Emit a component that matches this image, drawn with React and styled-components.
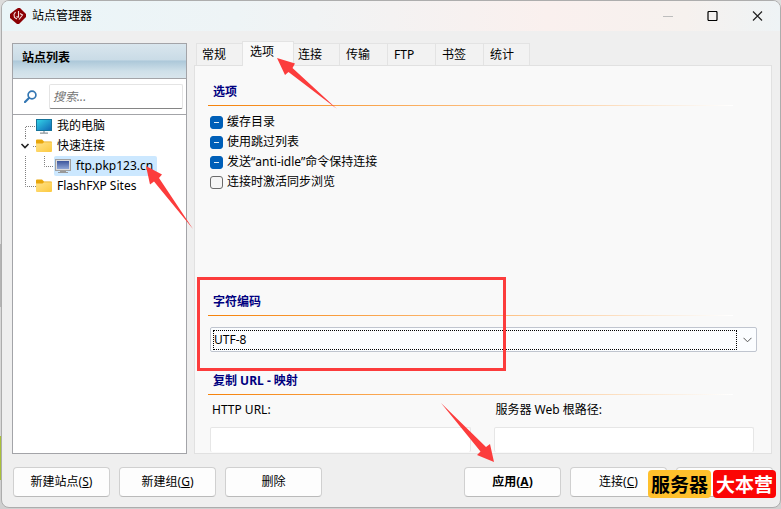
import styled, { createGlobalStyle, css } from "styled-components";

const GlobalStyle = createGlobalStyle`
  * {
    box-sizing: border-box;
  }

  body {
    margin: 0;
    color: #000;
    font-family: "Noto Sans", "Noto Sans CJK SC", sans-serif;
    font-size: 12px;
    line-height: 20px;
  }

  button, input, select {
    font: inherit;
    color: inherit;
  }
`

const Desktop = styled.div`
  position: relative;
  display: flex;
  min-height: 100vh;
  padding: 0 0 1px 1px;
  background: linear-gradient(#dcdcdc 244px, #b4b4b4 244px, #b4b4b4 307px, #d8d8d8 307px, #d8d8d8 436px, #a9c03a 436px, #a9c03a 480px, #d0d0d0 480px);
`

const Window = styled.div`
  display: flex;
  flex-direction: column;
  flex: 1;
  min-width: 0;
  border: 1px solid #adadad;
  border-radius: 8px;
  background-color: #efefef;
  overflow: hidden;
`

const TitleBar = styled.header`
  display: flex;
  align-items: center;
  height: 30px;
  padding-left: 8px;
  background: linear-gradient(90deg, #eaf5f8 0%, #eef4f6 30%, #faf0ee 70%, #f6f1ee 88%, #eef3f5 100%);
`

const Title = styled.h1`
  flex: 1;
  margin: 0 0 0 6px;
  font-size: 12px;
  font-weight: 400;
`

const CaptionButton = styled.button`
  display: flex;
  align-items: center;
  justify-content: center;
  width: 45px;
  height: 28px;
  padding: 0;
  border: none;
  background: transparent;
`

const Body = styled.div`
  display: flex;
  flex: 1;
  gap: 7px;
  padding: 10px 8px 0 10px;
`

const Sidebar = styled.aside`
  display: flex;
  flex-direction: column;
  width: 175px;
  margin-top: 2px;
  border: 1px solid #a3a4a8;
  background-color: #fff;
`

const SidebarTitle = styled.h2`
  height: 35px;
  margin: 0;
  padding: 4px 9px;
  border-bottom: 1px solid #a3a4a8;
  background: linear-gradient(#d9e6ee 0%, #c9dbe6 48%, #abc7d9 49%, #cfe0e9 80%, #d8e5ec 100%);
  font-size: 12px;
  font-weight: 700;
`

const SearchRow = styled.label`
  display: flex;
  align-items: center;
  gap: 12px;
  height: 36px;
  padding: 0 3px 0 11px;
  border-bottom: 1px solid #a3a4a8;
`

const SearchInput = styled.input`
  flex: 1;
  min-width: 0;
  height: 25px;
  padding: 0 3px;
  border: 1px solid #e4e4e4;
  border-bottom-color: #858585;
  border-radius: 2px;
  background-color: #fff;
  font-style: italic;

  &::placeholder {
    color: #757575;
  }
`

const Tree = styled.ul`
  margin: 0;
  padding: 1px 0 0 5px;
  list-style: none;
`

const TreeItem = styled.li`
  display: flex;
  align-items: center;
  height: 20px;
`

const Node = styled.span`
  display: flex;
  align-items: center;
  gap: 5px;
  height: 20px;
  padding-right: 4px;
  border-radius: 2px;
  ${({ $selected }) => $selected && css`
    padding-left: 1px;
    background-color: #cce8ff;
  `}
`

const Main = styled.main`
  display: flex;
  flex-direction: column;
  flex: 1;
  min-width: 0;
`

const TabList = styled.div`
  display: flex;
  align-items: flex-end;
  height: 25px;
  margin-bottom: -1px;
  padding-left: 2px;
`

const Tab = styled.button`
  width: 48px;
  height: 23px;
  padding: 0 0 0 6px;
  border: 1px solid #e3e3e3;
  border-left: none;
  background-color: #f2f2f2;
  text-align: left;

  &:first-child {
    padding-left: 5px;
    border-left: 1px solid #e3e3e3;
  }

  &:last-child {
    width: 46px;
  }

  ${({ $active }) => $active && css`
    position: relative;
    width: 52px;
    height: 25px;
    margin: 0 -2px;
    padding: 0 0 4px 7px;
    border-left: 1px solid #e3e3e3;
    border-bottom: none;
    background-color: #f9f9f9;
  `}
`

const Page = styled.div`
  flex: 1;
  padding: 16px 14px 0 13px;
  border: 1px solid #e1e1e1;
  background-color: #f9f9f9;
`

const Section = styled.section`
  min-height: ${({ $height }) => $height}px;
`

const SectionTitle = styled.h3`
  height: 24px;
  margin: 0 24px 0 0;
  padding-left: 5px;
  background: linear-gradient(90deg, #f5820a, #fdc48a 58%, #fbf3ea 92%, #fff) bottom / 100% 1px no-repeat;
  color: #000080;
  font-size: 12px;
  font-weight: 700;
`

const CheckList = styled.div`
  display: flex;
  flex-direction: column;
  padding: 6px 2px;
`

const CheckLabel = styled.label`
  display: flex;
  align-items: center;
  gap: 4px;
`

const CheckBox = styled.input`
  appearance: none;
  width: 13px;
  height: 13px;
  margin: 0;
  border: 1px solid #6b6b6b;
  border-radius: 3px;
  background-color: #f5f5f5;

  &:indeterminate {
    border-color: #005fb8;
    background: linear-gradient(#e6f0f8, #e6f0f8) center / 5px 1px no-repeat #005fb8;
  }
`

const SelectBox = styled.div`
  display: grid;
  align-items: center;
  margin: 11px 0 0 2px;
  border: 1px solid #c0c5cf;
  border-radius: 2px;
  background-color: #fbfdff;

  > * {
    grid-area: 1 / 1;
  }

  svg {
    justify-self: end;
    margin-right: 4px;
    pointer-events: none;
  }
`

const Select = styled.select`
  appearance: none;
  height: 20px;
  margin: 2px 19px 1px 2px;
  padding: 0;
  border: 1px dotted #000;
  background-color: transparent;
  line-height: 16px;
  outline: none;
`

const Fields = styled.div`
  display: grid;
  grid-template-columns: 1fr 1fr;
  gap: 23px;
  padding: 5px 3px 0 2px;
`

const Field = styled.label`
  display: flex;
  flex-direction: column;
  gap: 7px;
  text-indent: 2px;
`

const TextInput = styled.input`
  width: 100%;
  height: 25px;
  border: 1px solid #e6e6e6;
  border-bottom: none;
  border-radius: 2px;
  background-color: #fff;
`

const Footer = styled.footer`
  display: flex;
  gap: 9px;
  padding: 13px 7px 10px 11px;
`

const FooterGroup = styled.div`
  display: flex;
  gap: 9px;

  &:last-child {
    margin-left: auto;
  }
`

const PushButton = styled.button`
  width: 97px;
  height: 30px;
  padding: 0;
  border: 1px solid #d0d0d0;
  border-bottom-color: #bababa;
  border-radius: 4px;
  background-color: #fdfdfd;
  font-weight: ${({ $primary }) => ($primary ? 700 : 400)};
`

const Highlight = styled.div`
  position: absolute;
  top: 277px;
  left: 197px;
  width: 309px;
  height: 94px;
  border: 3px solid #fc3c3c;
  pointer-events: none;
`

const Pointers = styled.svg`
  position: absolute;
  top: 0;
  left: 0;
  pointer-events: none;
`

const Stamp = styled.div`
  position: absolute;
  right: 5px;
  bottom: 11px;
  display: flex;
  gap: 2px;
  pointer-events: none;
`

const StampPart = styled.span`
  padding: 0 3px;
  border-radius: 4px;
  background-color: ${({ $color }) => $color};
  color: ${({ $ink }) => $ink};
  font-family: "Noto Sans CJK SC", sans-serif;
  font-size: 19px;
  font-weight: 700;
  line-height: 28px;
`

const Logo = () => (
  <svg width="16" height="16" viewBox="0 0 16 16">
    <path d="M8 0 L10 0 L16 6 V9 L9 16 H7 L0 10 V6 L5 2 Z" fill="#8b0004" />
    <path d="M5.5 4 L4 6.5 L4.5 9.5 L7 11 M8.5 3 V9.5 M8.5 9.5 L6.5 8.5 M10 5.5 L12.5 7 L9 11.5" stroke="#f3dfe0" strokeWidth="1.1" fill="none" />
  </svg>
)

const SearchIcon = () => (
  <svg width="13" height="13" viewBox="0 0 13 13" fill="none" stroke="#3477b3">
    <circle cx="8" cy="5" r="3.9" strokeWidth="1.7" />
    <path d="M5 8 L1 12" strokeWidth="2.2" strokeLinecap="round" />
  </svg>
)

const MonitorIcon = () => (
  <svg width="16" height="16" viewBox="0 0 16 16">
    <defs>
      <linearGradient id="screen" x2="1" y2="1">
        <stop stopColor="#34d5e8" />
        <stop offset="1" stopColor="#0f66b5" />
      </linearGradient>
    </defs>
    <rect x=".5" y="1.5" width="15" height="11" fill="url(#screen)" stroke="#16739a" />
    <path d="M8 13 V15 M4 15.2 H12" stroke="#8c969c" strokeWidth="1.3" />
  </svg>
)

const FolderIcon = () => (
  <svg width="16" height="16" viewBox="0 0 16 16">
    <defs>
      <linearGradient id="folder" x2="1" y2="1">
        <stop stopColor="#ffe28a" />
        <stop offset="1" stopColor="#fcc93f" />
      </linearGradient>
    </defs>
    <path d="M0 2.5 Q0 1.5 1 1.5 H6 L8 3.5 H15 Q16 3.5 16 4.5 V8 H0 Z" fill="#e9a70c" />
    <path d="M0 5.5 H6.5 L8 4.2 H16 V13 Q16 14 15 14 H1 Q0 14 0 13 Z" fill="url(#folder)" />
  </svg>
)

const HostIcon = () => (
  <svg width="16" height="16" viewBox="0 0 16 16">
    <defs>
      <linearGradient id="host" x2="0" y2="1">
        <stop stopColor="#3d569c" />
        <stop offset="1" stopColor="#8fa6d6" />
      </linearGradient>
    </defs>
    <rect x=".5" y="1.5" width="15" height="11" fill="#dcdcdc" stroke="#a0a0a0" />
    <rect x="2" y="3" width="12" height="8" fill="url(#host)" />
    <path d="M5 13.5 H11 M3 14.5 H13" stroke="#999" />
  </svg>
)

const Chevron = () => (
  <svg width="9" height="6" viewBox="0 0 9 6" fill="none" stroke="#555">
    <path d="M.5 .8 L4.5 4.8 L8.5 .8" />
  </svg>
)

// The connecting lines in front of each node
const BRANCHES = {
  root: { width: 18, lines: "M7.5 20 V10.5 H18" },
  open: { width: 18, lines: "M7.5 0 V3 M15 10.5 H18", arrow: "M3.5 8 L7 11.5 L10.5 8" },
  child: { width: 36, lines: "M7.5 0 V20 M26.5 0 V10.5 H36" },
  last: { width: 18, lines: "M7.5 0 V10.5 H18" }
}

const Branch = ({ type }) => {
  const { width, lines, arrow } = BRANCHES[type];

  return (
    <svg width={width} height="20" fill="none">
      <path d={lines} stroke="#808080" strokeDasharray="1 1" />
      {arrow && <path d={arrow} stroke="#222" strokeWidth="1.6" />}
    </svg>
  )
}

const sites = [
  { name: "我的电脑", branch: "root", Icon: MonitorIcon },
  { name: "快速连接", branch: "open", Icon: FolderIcon },
  { name: "ftp.pkp123.cn", branch: "child", Icon: HostIcon, selected: true },
  { name: "FlashFXP Sites", branch: "last", Icon: FolderIcon }
]

const tabs = ["常规", "选项", "连接", "传输", "FTP", "书签", "统计"]

const options = [
  { label: "缓存目录", mixed: true },
  { label: "使用跳过列表", mixed: true },
  { label: "发送“anti-idle”命令保持连接", mixed: true },
  { label: "连接时激活同步浏览", mixed: false }
]

const Option = ({ label, mixed }) => {
  const setMixed = (el) => {
    if (el) el.indeterminate = mixed;
  }

  return (
    <CheckLabel>
      <CheckBox type="checkbox" ref={setMixed} />
      {label}
    </CheckLabel>
  )
}

const SiteList = () => (
  <Sidebar>
    <SidebarTitle>站点列表</SidebarTitle>
    <SearchRow>
      <SearchIcon />
      <SearchInput type="text" placeholder="搜索..." />
    </SearchRow>
    <Tree>
      {sites.map(({ name, branch, Icon, selected }) => (
        <TreeItem key={name}>
          <Branch type={branch} />
          <Node $selected={selected}>
            <Icon />
            {name}
          </Node>
        </TreeItem>
      ))}
    </Tree>
  </Sidebar>
)

const App = () => {
  return (
    <Desktop>
      <GlobalStyle />
      <Window>
        <TitleBar>
          <Logo />
          <Title>站点管理器</Title>
          <CaptionButton disabled>
            <svg width="10" height="10"><path d="M0 5.5 H10" stroke="#bdbdbd" /></svg>
          </CaptionButton>
          <CaptionButton>
            <svg width="11" height="10"><rect x="1" y=".5" width="9" height="9" rx="1" fill="none" stroke="#000" strokeWidth="1.2" /></svg>
          </CaptionButton>
          <CaptionButton>
            <svg width="11" height="10"><path d="M1 .5 L10 9.5 M10 .5 L1 9.5" stroke="#222" strokeWidth="1.2" /></svg>
          </CaptionButton>
        </TitleBar>
        <Body>
          <SiteList />
          <Main>
            <TabList role="tablist">
              {tabs.map((tab) => (
                <Tab key={tab} role="tab" aria-selected={tab === "选项"} $active={tab === "选项"}>{tab}</Tab>
              ))}
            </TabList>
            <Page>
              <Section $height={210}>
                <SectionTitle>选项</SectionTitle>
                <CheckList>
                  {options.map((option) => <Option key={option.label} {...option} />)}
                </CheckList>
              </Section>
              <Section $height={79}>
                <SectionTitle id="encoding">字符编码</SectionTitle>
                <SelectBox>
                  <Select aria-labelledby="encoding">
                    <option>UTF-8</option>
                  </Select>
                  <Chevron />
                </SelectBox>
              </Section>
              <Section>
                <SectionTitle>复制 URL - 映射</SectionTitle>
                <Fields>
                  <Field>
                    HTTP URL:
                    <TextInput type="text" />
                  </Field>
                  <Field>
                    服务器 Web 根路径:
                    <TextInput type="text" />
                  </Field>
                </Fields>
              </Section>
            </Page>
          </Main>
        </Body>
        <Footer>
          <FooterGroup>
            <PushButton>新建站点(<u>S</u>)</PushButton>
            <PushButton>新建组(<u>G</u>)</PushButton>
            <PushButton>删除</PushButton>
          </FooterGroup>
          <FooterGroup>
            <PushButton $primary>应用(<u>A</u>)</PushButton>
            <PushButton>连接(<u>C</u>)</PushButton>
            <PushButton aria-label="取消" />
          </FooterGroup>
        </Footer>
      </Window>
      <Highlight />
      <Pointers width="510" height="470" fill="#fc3c3c">
        <path d="M277 58 L295 63.5 L292.5 68 L337 109 L288.5 72 L285 75 Z" />
        <path d="M146 166 L162 174.5 L159 178 L193 229 L154 181.5 L150 184.5 Z" />
        <path d="M494 462 L490 444 L486 447 L441 403 L480.5 451.5 L477 455 Z" />
      </Pointers>
      <Stamp>
        <StampPart $color="#ffc02c" $ink="#000">服务器</StampPart>
        <StampPart $color="#fb0505" $ink="#fff">大本营</StampPart>
      </Stamp>
    </Desktop>
  )
}

export default App;
